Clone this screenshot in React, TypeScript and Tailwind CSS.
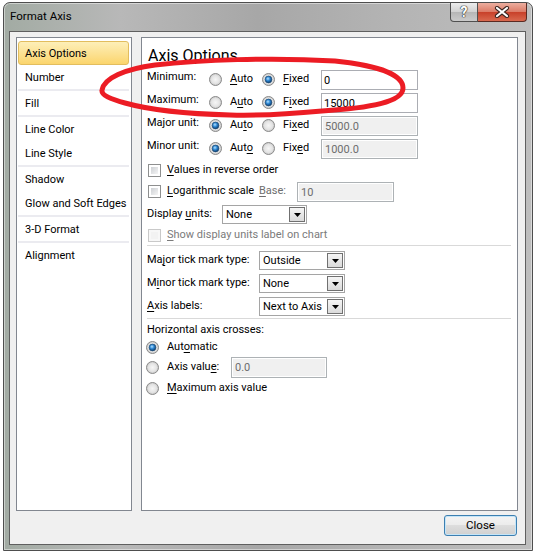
import React, { Fragment } from 'react';

const navGroups: string[][] = [
  ['Axis Options', 'Number'],
  ['Fill'],
  ['Line Color', 'Line Style'],
  ['Shadow', 'Glow and Soft Edges'],
  ['3-D Format'],
  ['Alignment'],
];

// text with one underlined access key
function mn(text: string, i: number) {
  return (
    <>
      {text.slice(0, i)}
      <span className="underline underline-offset-[2px] decoration-1">{text[i]}</span>
      {text.slice(i + 1)}
    </>
  );
}

function Radio({ checked = false }: { checked?: boolean }) {
  return (
    <svg width="13" height="13" viewBox="0 0 13 13" className="shrink-0">
      <defs>
        <radialGradient id="radioOff" cx="0.5" cy="0.5" r="0.55">
          <stop offset="0" stopColor="#f6f6f6" />
          <stop offset="0.6" stopColor="#e4e4e4" />
          <stop offset="1" stopColor="#bdbdbd" />
        </radialGradient>
        <radialGradient id="radioOn" cx="0.42" cy="0.38" r="0.6">
          <stop offset="0" stopColor="#b4e2ff" />
          <stop offset="0.5" stopColor="#2c86d3" />
          <stop offset="1" stopColor="#0f3e6e" />
        </radialGradient>
      </defs>
      <circle cx="6.5" cy="6.5" r="6" fill="url(#radioOff)" stroke="#8b8b8b" />
      {checked && <circle cx="6.5" cy="6.5" r="3.4" fill="url(#radioOn)" stroke="#1f4d79" strokeWidth="0.7" />}
    </svg>
  );
}

function Checkbox({ disabled = false }: { disabled?: boolean }) {
  return (
    <span
      className={`ml-[1px] w-[13px] h-[13px] shrink-0 border p-[2px] ${
        disabled ? 'border-[#c9c9c9] bg-[#f7f7f7]' : 'border-[#8e8f8f] bg-white'
      }`}
    >
      <span
        className={`block w-full h-full ${
          disabled ? 'bg-[#f2f2f2]' : 'bg-linear-to-br from-[#cdd0d4] to-[#f5f5f5]'
        }`}
      />
    </span>
  );
}

function TextBox({ value, disabled = false, className = '' }: { value: string; disabled?: boolean; className?: string }) {
  return (
    <span
      className={`h-[20px] border flex ${
        disabled ? 'border-[#adb2b5] bg-white p-[1px] text-[#6d6d6d]' : 'border-[#abadb3] bg-white text-black'
      } ${className}`}
    >
      <span className={`flex-1 pl-[2px] leading-[17px] ${disabled ? 'bg-[#f0f0f0]' : 'pt-[1px]'}`}>{value}</span>
    </span>
  );
}

function Combo({ value, className = '' }: { value: string; className?: string }) {
  return (
    <span className={`h-[19px] border border-[#a5a5a5] bg-white flex items-stretch ${className}`}>
      <span className="flex-1 pl-[3px] leading-[17px] whitespace-nowrap overflow-hidden">{value}</span>
      <span className="w-[16px] m-[1px] border border-[#707070] bg-linear-to-b from-[#f5f5f5] to-[#dadada] flex items-center justify-center">
        <svg width="7" height="4" viewBox="0 0 7 4">
          <path d="M0 0H7L3.5 4Z" fill="#000" />
        </svg>
      </span>
    </span>
  );
}

function UnitRow({
  label,
  autoKey,
  fixedKey,
  auto,
  value,
}: {
  label: string;
  autoKey: number;
  fixedKey: number;
  auto: boolean;
  value: string;
}) {
  return (
    <div className="h-[23px] flex items-center">
      <span className="w-[62px] self-start pt-[1px] leading-[16px]">{label}</span>
      <span className="w-[53px] flex items-center gap-[8px]">
        <Radio checked={auto} />
        <span>{mn('Auto', autoKey)}</span>
      </span>
      <span className="w-[59px] flex items-center gap-[8px]">
        <Radio checked={!auto} />
        <span>{mn('Fixed', fixedKey)}</span>
      </span>
      <TextBox className="w-[97px]" value={value} disabled={auto} />
    </div>
  );
}

// padding, not margin, so the line offset does not collapse out of the box
function Divider({ h, top }: { h: string; top: string }) {
  return (
    <div className={`${h} ${top}`}>
      <div className="h-[1px] bg-[#d9d9d9]" />
    </div>
  );
}

function NavList() {
  return (
    <div className="w-[116px] h-full border border-[#828790] bg-white pt-[3px]">
      {navGroups.map((group, gi) => (
        <Fragment key={gi}>
          {gi > 0 && <div className="h-[2px] ml-[1px] mr-[2px] bg-[#ebebf0]" />}
          {group.map((item) =>
            item === 'Axis Options' ? (
              <div
                key={item}
                className="h-[24px] ml-[1px] mr-[2px] px-[6px] pt-[2px] flex items-center rounded-[3px] border border-[#e2bd5e] bg-linear-to-b from-[#fdefb8] to-[#fbd56c]"
              >
                {item}
              </div>
            ) : (
              <div
                key={item}
                className="h-[24px] ml-[1px] mr-[2px] px-[6px] pt-[2px] flex items-center border border-transparent whitespace-nowrap"
              >
                {item}
              </div>
            )
          )}
        </Fragment>
      ))}
    </div>
  );
}

function OptionsPanel() {
  return (
    <div className="w-[377px] h-full border border-[#828790] bg-white pl-[5px] pr-[6px]">
      <div className="h-[30px] pt-[8px] ml-[1px] text-[16px] leading-[20px]">Axis Options</div>
      <UnitRow label="Minimum:" autoKey={0} fixedKey={0} auto={false} value="0" />
      <UnitRow label="Maximum:" autoKey={1} fixedKey={1} auto={false} value="15000" />
      <UnitRow label="Major unit:" autoKey={2} fixedKey={2} auto value="5000.0" />
      <UnitRow label="Minor unit:" autoKey={3} fixedKey={3} auto value="1000.0" />

      <div className="h-[21px] flex items-center">
        <Checkbox />
        <span className="ml-[6px]">{mn('Values in reverse order', 0)}</span>
      </div>
      <div className="h-[21px] flex items-center">
        <Checkbox />
        <span className="ml-[6px] w-[92px]">{mn('Logarithmic scale', 0)}</span>
        <span className="w-[38px] text-[#6d6d6d]">{mn('Base:', 0)}</span>
        <TextBox className="w-[97px]" value="10" disabled />
      </div>
      <div className="h-[25px] flex items-center">
        <span className="w-[75px]">{mn('Display units:', 8)}</span>
        <Combo className="w-[85px]" value="None" />
      </div>
      <div className="h-[16px] flex items-center">
        <Checkbox disabled />
        <span className="ml-[6px] text-[#7b7b7b]">{mn('Show display units label on chart', 0)}</span>
      </div>

      <Divider h="h-[6px]" top="pt-[2px]" />

      <div className="h-[23px] flex items-center">
        <span className="w-[112px]">{mn('Major tick mark type:', 2)}</span>
        <Combo className="w-[86px]" value="Outside" />
      </div>
      <div className="h-[23px] flex items-center">
        <span className="w-[112px]">{mn('Minor tick mark type:', 1)}</span>
        <Combo className="w-[86px]" value="None" />
      </div>
      <div className="h-[23px] flex items-center">
        <span className="w-[112px]">{mn('Axis labels:', 0)}</span>
        <Combo className="w-[86px]" value="Next to Axis" />
      </div>

      <Divider h="h-[4px]" top="pt-0" />

      <div className="h-[17px] flex items-center">Horizontal axis crosses:</div>
      <div className="h-[17px] flex items-center -ml-[1px]">
        <Radio checked />
        <span className="ml-[8px]">{mn('Automatic', 3)}</span>
      </div>
      <div className="h-[22px] flex items-center -ml-[1px]">
        <Radio />
        <span className="ml-[8px] w-[64px]">{mn('Axis value:', 9)}</span>
        <TextBox className="w-[96px] h-[21px]" value="0.0" disabled />
      </div>
      <div className="h-[20px] flex items-center -ml-[1px]">
        <Radio />
        <span className="ml-[8px]">{mn('Maximum axis value', 0)}</span>
      </div>
    </div>
  );
}

function CaptionButtons() {
  return (
    <div className="ml-auto mr-[5px] flex self-start">
      <div className="w-[28px] h-[19px] rounded-bl-[4px] border border-t-0 border-[#505050] bg-[linear-gradient(#ececec_0%,#d2d2d2_48%,#b6b6b6_52%,#cbcbcb_100%)] flex items-center justify-center">
        <span className="text-white font-bold text-[14px] leading-none [text-shadow:0_0_1px_#222,0_0_1px_#222,0_0_1px_#222]">?</span>
      </div>
      <div className="w-[49px] h-[19px] rounded-br-[4px] border border-t-0 border-l-0 border-[#5a2a22] bg-[linear-gradient(#ecae9f_0%,#dc7c68_48%,#c8412a_52%,#d9694f_100%)] flex items-center justify-center">
        <svg width="16" height="12" viewBox="0 0 16 12">
          <path d="M3 2L13 10M13 2L3 10" stroke="#3b2520" strokeWidth="4.2" strokeLinecap="round" />
          <path d="M3 2L13 10M13 2L3 10" stroke="#ffffff" strokeWidth="2.2" strokeLinecap="round" />
        </svg>
      </div>
    </div>
  );
}

export default function App() {
  return (
    <div className="relative w-[536px] h-[555px] overflow-hidden bg-white pt-[2px] pl-[3px] font-['Roboto',sans-serif] text-[11px] text-black">
      <div className="w-[530px] h-[549px] rounded-t-[7px] border border-[#4e4e4e] bg-[linear-gradient(90deg,#a2aba3_0%,#b8b8b8_22%,#a7a7a7_48%,#b4b4b4_74%,#bebebe_100%)] shadow-[inset_0_0_0_1px_rgba(255,255,255,0.45)] flex flex-col">
        <div className="h-[28px] flex">
          <span className="pl-[6px] pt-[5px] text-[11.5px] leading-[16px]">Format Axis</span>
          <CaptionButtons />
        </div>
        <div className="ml-[5px] w-[517px] h-[514px] border border-[#5f5f5f] bg-[#f0f0f0] pt-[5px] pl-[6px] pr-[7px] flex flex-col">
          <div className="h-[474px] flex gap-[9px]">
            <NavList />
            <OptionsPanel />
          </div>
          <div className="mt-[4px] flex justify-end pr-[1px]">
            <button className="w-[73px] h-[21px] rounded-[3px] border border-[#3c7fb1] shadow-[inset_0_0_0_1px_#c4e5f8] bg-[linear-gradient(#f4f4f4_0%,#ebebeb_50%,#dddddd_50%,#d0d0d0_100%)] text-[11.5px] leading-[19px]">
              Close
            </button>
          </div>
        </div>
      </div>

      {/* hand-drawn red annotation */}
      <svg className="absolute inset-0 pointer-events-none" width="536" height="555" viewBox="0 0 536 555">
        <path
          d="M102 90C104 78 125 69 155 65C200 60 270 57 335 61C375 65 403 74 403 88C403 102 370 108 322 111C290 114 265 116 230 115C190 114 150 110 125 103C110 99 101 95 102 90Z"
          fill="none"
          stroke="#ec1c24"
          strokeWidth="5"
          strokeLinejoin="round"
        />
      </svg>
    </div>
  );
}
